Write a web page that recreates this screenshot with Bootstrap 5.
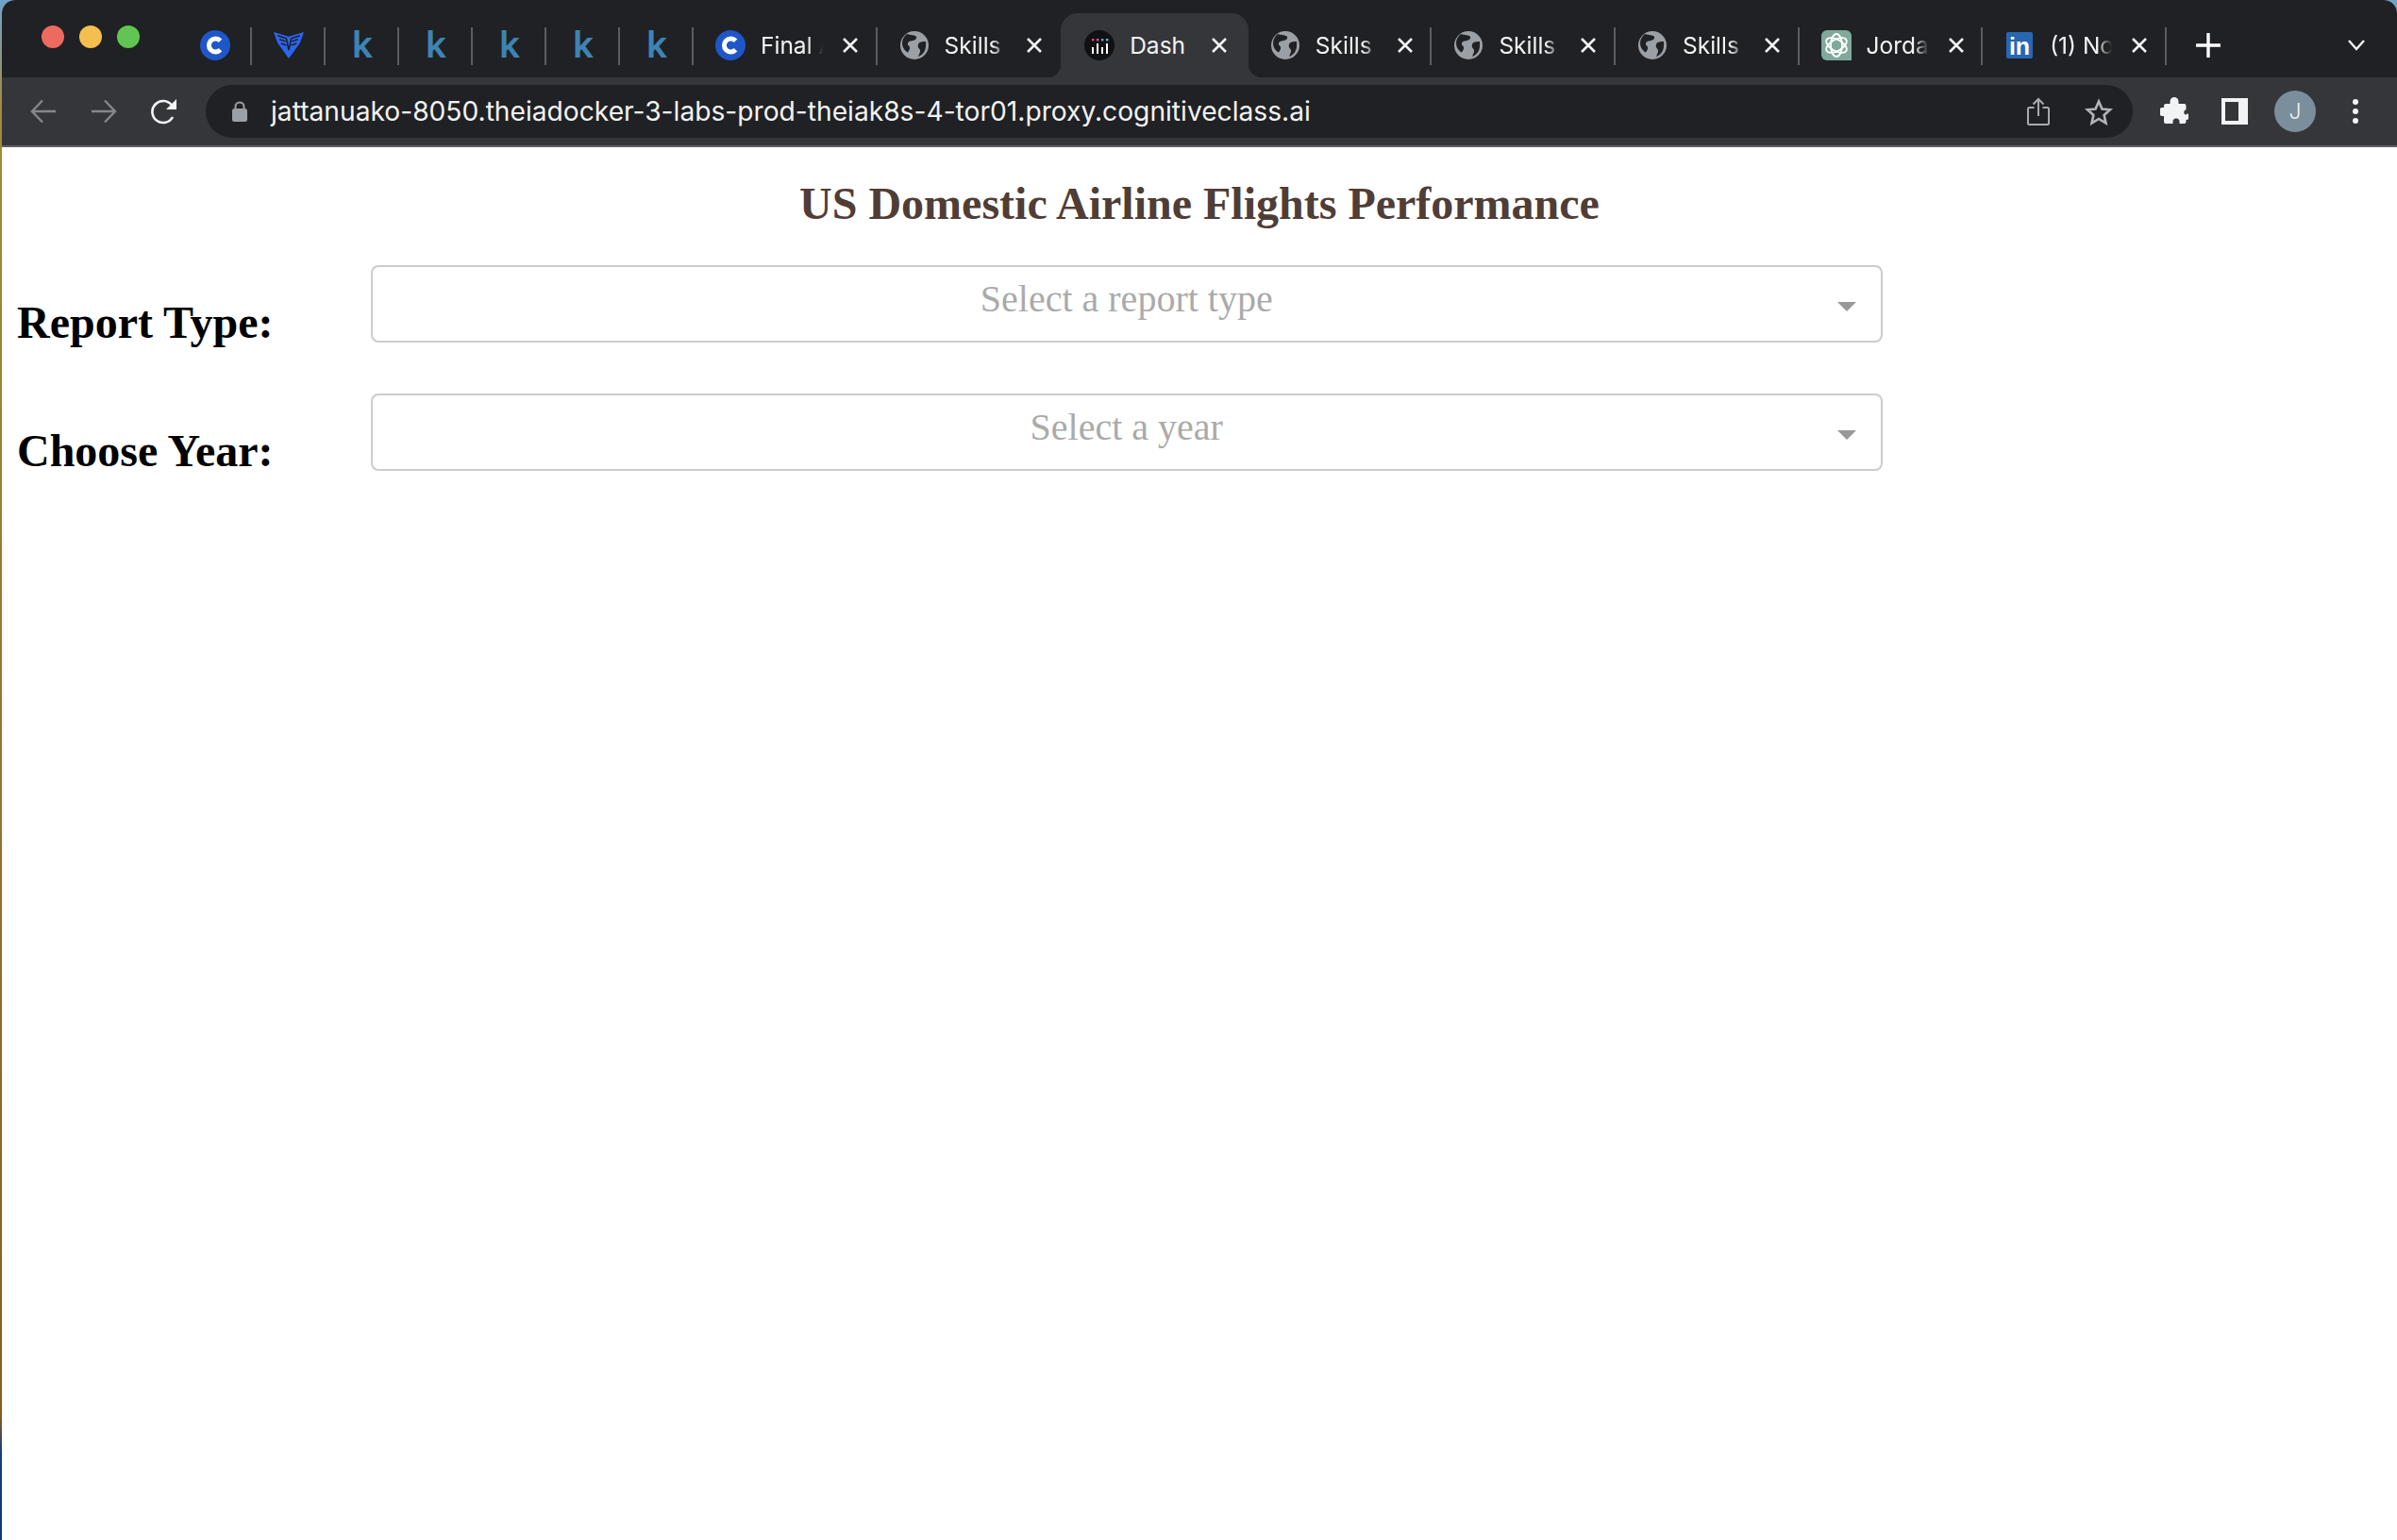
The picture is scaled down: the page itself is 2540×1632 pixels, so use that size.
<!DOCTYPE html>
<html lang="en">
<head>
  <meta charset="UTF-8">
  <meta name="viewport" content="width=device-width, initial-scale=1.0">
  <title>Dash</title>
  <link href="https://cdn.jsdelivr.net/npm/bootstrap@5.3.2/dist/css/bootstrap.min.css" rel="stylesheet">
  <style>
    html, body { height: 100%; }
    body {
      background: linear-gradient(180deg, #6fa3cc 0, #a58a3c 120px, #8a5a24 1500px, #123f78 1540px, #0d3a74 100%);
      font-family: "Liberation Serif", serif;
    }
    .app-window {
      margin-left: 2px;
      min-height: 100vh;
      background: #fff;
      border-top-left-radius: 14px;
      border-top-right-radius: 14px;
      overflow: hidden;
    }

    /* browser chrome */
    .tab-strip {
      height: 82px;
      background: #202124;
      font-family: Inter, "Noto Sans", sans-serif;
      color: #f1f3f4;
    }
    .lights { padding: 27px 0 0 42px; gap: 16px; width: 187px; }
    .light { width: 24px; height: 24px; border-radius: 50%; }
    .tab-cell {
      position: relative;
      height: 68px;
      margin-top: 14px;
      flex: 0 0 auto;
    }
    .tab-cell.sep::after {
      content: "";
      position: absolute;
      right: 0;
      top: 15px;
      width: 2px;
      height: 40px;
      background: #5b5d60;
    }
    .tab-mini { width: 78px; }
    .tab-wide { width: 194.6px; padding: 0 18px 0 23px; }
    .tab-active {
      width: 198.6px;
      padding: 0 21px 0 25px;
      background: #35363a;
      border-radius: 18px 18px 0 0;
    }
    .tab-active::before, .tab-active::after {
      content: "";
      position: absolute;
      bottom: 0;
      width: 14px;
      height: 14px;
    }
    .tab-active::before { left: -14px; background: radial-gradient(circle at 0 0, #202124 14px, #35363a 14.5px); }
    .tab-active::after { right: -14px; background: radial-gradient(circle at 100% 0, #202124 14px, #35363a 14.5px); }
    .tab-title {
      width: 77px;
      margin: 0 8px 0 16px;
      font-size: 24.5px;
      line-height: 34px;
      white-space: nowrap;
      overflow: hidden;
      -webkit-mask-image: linear-gradient(90deg, #000 50px, transparent 66px);
      mask-image: linear-gradient(90deg, #000 50px, transparent 66px);
    }
    .tab-title-plain { -webkit-mask-image: none; mask-image: none; }
    .fav { width: 32px; height: 32px; flex: 0 0 auto; display: block; }
    .fav-k {
      color: #3d84b5;
      font-size: 39px;
      font-weight: 600;
      line-height: 1;
      margin-top: -4px;
    }
    .tab-close { width: 20px; height: 20px; flex: 0 0 auto; }
    .strip-plus { margin-left: 26px; margin-top: 14px; height: 68px; width: 36px; }
    .strip-chevron { margin-left: auto; margin-right: 33px; margin-top: 14px; height: 68px; }

    .tool-bar {
      height: 74px;
      background: #35363a;
      border-bottom: 2px solid #5d5e61;
      padding: 8px 12px 0 12px;
      font-family: Inter, "Noto Sans", sans-serif;
    }
    .tool-btn { width: 64px; height: 56px; flex: 0 0 auto; }
    .omnibox {
      height: 56px;
      margin: 0 12px;
      padding: 0 4px 0 28px;
      background: #202124;
      border-radius: 28px;
      flex: 1 1 auto;
      min-width: 0;
    }
    .omni-url {
      margin-left: 25px;
      color: #f1f3f4;
      font-size: 28.18px;
      white-space: nowrap;
    }
    .user-dot {
      width: 44px;
      height: 44px;
      border-radius: 50%;
      background: #7b8e9b;
      color: #f1f3f4;
      font-size: 23px;
      font-weight: 300;
    }

    /* dash app */
    .page-title {
      color: #503d36;
      font-size: 48px;
      font-weight: 700;
      line-height: 58px;
      margin: 31px 0 0;
      font-family: "Liberation Serif", serif;
    }
    .form-rows { padding-top: 36px; }
    .form-line { margin-bottom: 46px; padding-left: 16px; }
    .form-label-big {
      width: 375px;
      flex: 0 0 auto;
      margin: 32px 0 0;
      color: #000;
      font-size: 48px;
      font-weight: 700;
      line-height: 58px;
      font-family: "Liberation Serif", serif;
    }
    .dash-select {
      position: relative;
      width: 1601.500px;
      height: 82px;
      border: 2px solid #ccc;
      border-radius: 8px;
      color: #aaa;
      font-size: 40px;
      line-height: 67px;
      text-align: center;
    }
    .dash-select::after {
      content: "";
      position: absolute;
      right: 26px;
      top: 37px;
      border-style: solid;
      border-width: 10px 10px 0;
      border-color: #999 transparent transparent;
    }
  </style>
</head>
<body>
  <div class="app-window d-flex flex-column">
    <!-- tab strip -->
    <div class="tab-strip d-flex">
      <div class="lights d-flex">
        <div class="light" style="background:#ed6a5e"></div>
        <div class="light" style="background:#f5bf4f"></div>
        <div class="light" style="background:#61c554"></div>
      </div>

      <div class="tab-cell tab-mini sep d-flex align-items-center justify-content-center">
        <svg class="fav" viewBox="0 0 32 32"><circle cx="16" cy="16" r="16" fill="#1f56c8"/><path d="M21.5 11.200a7 7 0 1 0 0 9.600" fill="none" stroke="#fff" stroke-width="5"/></svg>
      </div>
      <div class="tab-cell tab-mini sep d-flex align-items-center justify-content-center">
        <svg class="fav" viewBox="0 0 31 27"><path d="M0 0l15.500 4.500L31 0l-4 11-11.500 16L4 11z" fill="#2a66f0"/><path d="M4 3.500l9 3M6 7.500l6.500 2M7.500 11.500l5.500 2M27 3.500l-9 3M25 7.500l-6.500 2M23.500 11.500l-5.500 2M13 6.500l2.500 12 2.500-12" fill="none" stroke="#202124" stroke-width="1.500"/></svg>
      </div>
      <div class="tab-cell tab-mini sep d-flex align-items-center justify-content-center"><span class="fav-k">k</span></div>
      <div class="tab-cell tab-mini sep d-flex align-items-center justify-content-center"><span class="fav-k">k</span></div>
      <div class="tab-cell tab-mini sep d-flex align-items-center justify-content-center"><span class="fav-k">k</span></div>
      <div class="tab-cell tab-mini sep d-flex align-items-center justify-content-center"><span class="fav-k">k</span></div>
      <div class="tab-cell tab-mini sep d-flex align-items-center justify-content-center"><span class="fav-k">k</span></div>

      <div class="tab-cell tab-wide sep d-flex align-items-center">
        <svg class="fav" viewBox="0 0 32 32"><circle cx="16" cy="16" r="16" fill="#1f56c8"/><path d="M21.5 11.200a7 7 0 1 0 0 9.600" fill="none" stroke="#fff" stroke-width="5"/></svg>
        <div class="tab-title">Final A</div>
        <svg class="tab-close" viewBox="0 0 20 20"><path d="M3 3l14 14M17 3L3 17" stroke="#f1f3f4" stroke-width="2.600"/></svg>
      </div>
      <div class="tab-cell tab-wide d-flex align-items-center">
        <svg class="fav" viewBox="0 0 32 32"><circle cx="16" cy="16" r="15" fill="#9aa0a6"/><path d="M8 4c4 1.500 9 1 10 3 1 3-3 4-6 4.500-3 .5-4 3-2 5 2 2 1 4-1 7-4-2-6-6-6-10 0-4 2-7 5-9.500zM28 12c-3 0-7 0-8 3-1 3 1 4 2 6 .5 2-1 4-2 7 5-2 9-6 8-16z" fill="#202124"/></svg>
        <div class="tab-title">Skills</div>
        <svg class="tab-close" viewBox="0 0 20 20"><path d="M3 3l14 14M17 3L3 17" stroke="#f1f3f4" stroke-width="2.600"/></svg>
      </div>
      <div class="tab-cell tab-active d-flex align-items-center">
        <svg class="fav" viewBox="0 0 32 32"><circle cx="16" cy="16" r="16" fill="#111114"/>
          <rect x="8" y="9" width="2.400" height="2.400" fill="#e0457b"/>
          <rect x="13" y="9" width="2.400" height="2.400" fill="#c95fa0"/>
          <rect x="18" y="9" width="2.400" height="2.400" fill="#8f8fd0"/>
          <rect x="23" y="9" width="2.400" height="2.400" fill="#58b8e0"/>
          <g fill="#fff"><rect x="8" y="18" width="2" height="7"/><rect x="13" y="14" width="2" height="11"/><rect x="18" y="18" width="2" height="7"/><rect x="23" y="14" width="2" height="11"/></g></svg>
        <div class="tab-title tab-title-plain">Dash</div>
        <svg class="tab-close" viewBox="0 0 20 20"><path d="M3 3l14 14M17 3L3 17" stroke="#f1f3f4" stroke-width="2.600"/></svg>
      </div>
      <div class="tab-cell tab-wide sep d-flex align-items-center">
        <svg class="fav" viewBox="0 0 32 32"><circle cx="16" cy="16" r="15" fill="#9aa0a6"/><path d="M8 4c4 1.500 9 1 10 3 1 3-3 4-6 4.500-3 .5-4 3-2 5 2 2 1 4-1 7-4-2-6-6-6-10 0-4 2-7 5-9.500zM28 12c-3 0-7 0-8 3-1 3 1 4 2 6 .5 2-1 4-2 7 5-2 9-6 8-16z" fill="#202124"/></svg>
        <div class="tab-title">Skills</div>
        <svg class="tab-close" viewBox="0 0 20 20"><path d="M3 3l14 14M17 3L3 17" stroke="#f1f3f4" stroke-width="2.600"/></svg>
      </div>
      <div class="tab-cell tab-wide sep d-flex align-items-center">
        <svg class="fav" viewBox="0 0 32 32"><circle cx="16" cy="16" r="15" fill="#9aa0a6"/><path d="M8 4c4 1.500 9 1 10 3 1 3-3 4-6 4.500-3 .5-4 3-2 5 2 2 1 4-1 7-4-2-6-6-6-10 0-4 2-7 5-9.500zM28 12c-3 0-7 0-8 3-1 3 1 4 2 6 .5 2-1 4-2 7 5-2 9-6 8-16z" fill="#202124"/></svg>
        <div class="tab-title">Skills</div>
        <svg class="tab-close" viewBox="0 0 20 20"><path d="M3 3l14 14M17 3L3 17" stroke="#f1f3f4" stroke-width="2.600"/></svg>
      </div>
      <div class="tab-cell tab-wide sep d-flex align-items-center">
        <svg class="fav" viewBox="0 0 32 32"><circle cx="16" cy="16" r="15" fill="#9aa0a6"/><path d="M8 4c4 1.500 9 1 10 3 1 3-3 4-6 4.500-3 .5-4 3-2 5 2 2 1 4-1 7-4-2-6-6-6-10 0-4 2-7 5-9.500zM28 12c-3 0-7 0-8 3-1 3 1 4 2 6 .5 2-1 4-2 7 5-2 9-6 8-16z" fill="#202124"/></svg>
        <div class="tab-title">Skills</div>
        <svg class="tab-close" viewBox="0 0 20 20"><path d="M3 3l14 14M17 3L3 17" stroke="#f1f3f4" stroke-width="2.600"/></svg>
      </div>
      <div class="tab-cell tab-wide sep d-flex align-items-center">
        <svg class="fav" viewBox="0 0 32 32"><path d="M0 6a6 6 0 0 1 6-6h20a6 6 0 0 1 6 6v26H6a6 6 0 0 1-6-6z" fill="#7fa99b"/>
          <g fill="none" stroke="#fff" stroke-width="1.800"><ellipse cx="16" cy="16" rx="12" ry="6" transform="rotate(30 16 16)"/><ellipse cx="16" cy="16" rx="12" ry="6" transform="rotate(-30 16 16)"/><ellipse cx="16" cy="16" rx="12" ry="6" transform="rotate(90 16 16)"/></g></svg>
        <div class="tab-title">Jorda</div>
        <svg class="tab-close" viewBox="0 0 20 20"><path d="M3 3l14 14M17 3L3 17" stroke="#f1f3f4" stroke-width="2.600"/></svg>
      </div>
      <div class="tab-cell tab-wide sep d-flex align-items-center">
        <svg class="fav" viewBox="0 0 32 32"><rect x="2" y="2" width="28" height="28" rx="2" fill="#2867b2"/><text x="16" y="26" text-anchor="middle" font-family="Liberation Sans, sans-serif" font-weight="700" font-size="25" fill="#fff">in</text></svg>
        <div class="tab-title">(1) No</div>
        <svg class="tab-close" viewBox="0 0 20 20"><path d="M3 3l14 14M17 3L3 17" stroke="#f1f3f4" stroke-width="2.600"/></svg>
      </div>

      <div class="strip-plus d-flex align-items-center justify-content-center">
        <svg width="26" height="26" viewBox="0 0 26 26"><path d="M13 1v24M1 13h24" stroke="#fff" stroke-width="3.400" stroke-linecap="round"/></svg>
      </div>
      <div class="strip-chevron d-flex align-items-center">
        <svg width="20" height="14" viewBox="0 0 20 14"><path d="M2 2l8 9 8-9" fill="none" stroke="#f1f3f4" stroke-width="2.400"/></svg>
      </div>
    </div>

    <!-- toolbar -->
    <div class="tool-bar d-flex">
      <div class="tool-btn d-flex align-items-center justify-content-center">
        <svg width="28" height="26" viewBox="0 0 28 26"><path d="M27 13H2M13 1.500L2 13l11 11.500" fill="none" stroke="#85878a" stroke-width="2.400"/></svg>
      </div>
      <div class="tool-btn d-flex align-items-center justify-content-center">
        <svg width="28" height="26" viewBox="0 0 28 26"><path d="M1 13h25M15 1.500L26 13 15 24.500" fill="none" stroke="#85878a" stroke-width="2.400"/></svg>
      </div>
      <div class="tool-btn d-flex align-items-center justify-content-center">
        <svg width="28" height="28" viewBox="0 0 28 28"><path d="M23 20a11.500 11.500 0 1 1-1-12.500" fill="none" stroke="#f1f3f4" stroke-width="2.600"/><path d="M27 1v11H16z" fill="#f1f3f4"/></svg>
      </div>

      <div class="omnibox d-flex align-items-center">
        <svg width="16" height="22" viewBox="0 0 16 22"><path d="M3.500 9V6a4.500 4.500 0 0 1 9 0v3" fill="none" stroke="#9aa0a6" stroke-width="2"/><rect y="8" width="16" height="14" rx="2.500" fill="#9aa0a6"/></svg>
        <span class="omni-url">jattanuako-8050.theiadocker-3-labs-prod-theiak8s-4-tor01.proxy.cognitiveclass.ai</span>
        <div class="tool-btn ms-auto d-flex align-items-center justify-content-center">
          <svg width="24" height="30" viewBox="0 0 24 30"><path d="M7.500 11H2.500a1.500 1.500 0 0 0-1.500 1.500v15A1.500 1.500 0 0 0 2.500 29h19a1.500 1.500 0 0 0 1.500-1.500v-15a1.500 1.500 0 0 0-1.500-1.500h-5M12 20V2M6.500 7.500L12 2l5.500 5.500" fill="none" stroke="#a8abae" stroke-width="2"/></svg>
        </div>
        <div class="tool-btn d-flex align-items-center justify-content-center">
          <svg width="30" height="29" viewBox="0 0 30 29"><path d="M15 3.500l3.500 8 8.500.8-6.400 5.700 1.900 8.500L15 22l-7.500 4.500 1.900-8.500L3 12.300l8.500-.8z" fill="none" stroke="#b3b5b8" stroke-width="2.600"/></svg>
        </div>
      </div>

      <div class="tool-btn d-flex align-items-center justify-content-center">
        <svg width="30" height="30" viewBox="0 0 30 30"><path d="M10.500 4.500a4.500 4.500 0 0 1 9 0V7h6a2 2 0 0 1 2 2v4.500h-1a3.500 3.500 0 0 0 0 5h1a2 2 0 0 1 2-1 3.500 3.500 0 0 1-2 6.500V26a2 2 0 0 1-2 2h-5v-2a3.500 3.500 0 0 0-7 0v2H6a2 2 0 0 1-2-2v-6H2.500a4.500 4.500 0 0 1 0-9H4V9a2 2 0 0 1 2-2h4.500z" fill="#f1f3f4"/></svg>
      </div>
      <div class="tool-btn d-flex align-items-center justify-content-center">
        <svg width="28" height="28" viewBox="0 0 28 28"><rect width="28" height="28" fill="#f1f3f4"/><rect x="4" y="4" width="14" height="20" fill="#35363a"/></svg>
      </div>
      <div class="tool-btn d-flex align-items-center justify-content-center">
        <div class="user-dot d-flex align-items-center justify-content-center">J</div>
      </div>
      <div class="tool-btn d-flex align-items-center justify-content-center">
        <svg width="6" height="26" viewBox="0 0 6 26"><circle cx="3" cy="3" r="3" fill="#f1f3f4"/><circle cx="3" cy="13" r="3" fill="#f1f3f4"/><circle cx="3" cy="23" r="3" fill="#f1f3f4"/></svg>
      </div>
    </div>

    <!-- dash layout -->
    <main class="flex-grow-1">
      <h1 class="page-title text-center">US Domestic Airline Flights Performance</h1>
      <div class="form-rows">
        <div class="form-line d-flex">
          <h2 class="form-label-big">Report Type:</h2>
          <div class="dash-select">Select a report type</div>
        </div>
        <div class="form-line d-flex">
          <h2 class="form-label-big">Choose Year:</h2>
          <div class="dash-select">Select a year</div>
        </div>
      </div>
    </main>
  </div>
  <script src="https://cdn.jsdelivr.net/npm/bootstrap@5.3.2/dist/js/bootstrap.bundle.min.js"></script>
</body>
</html>
